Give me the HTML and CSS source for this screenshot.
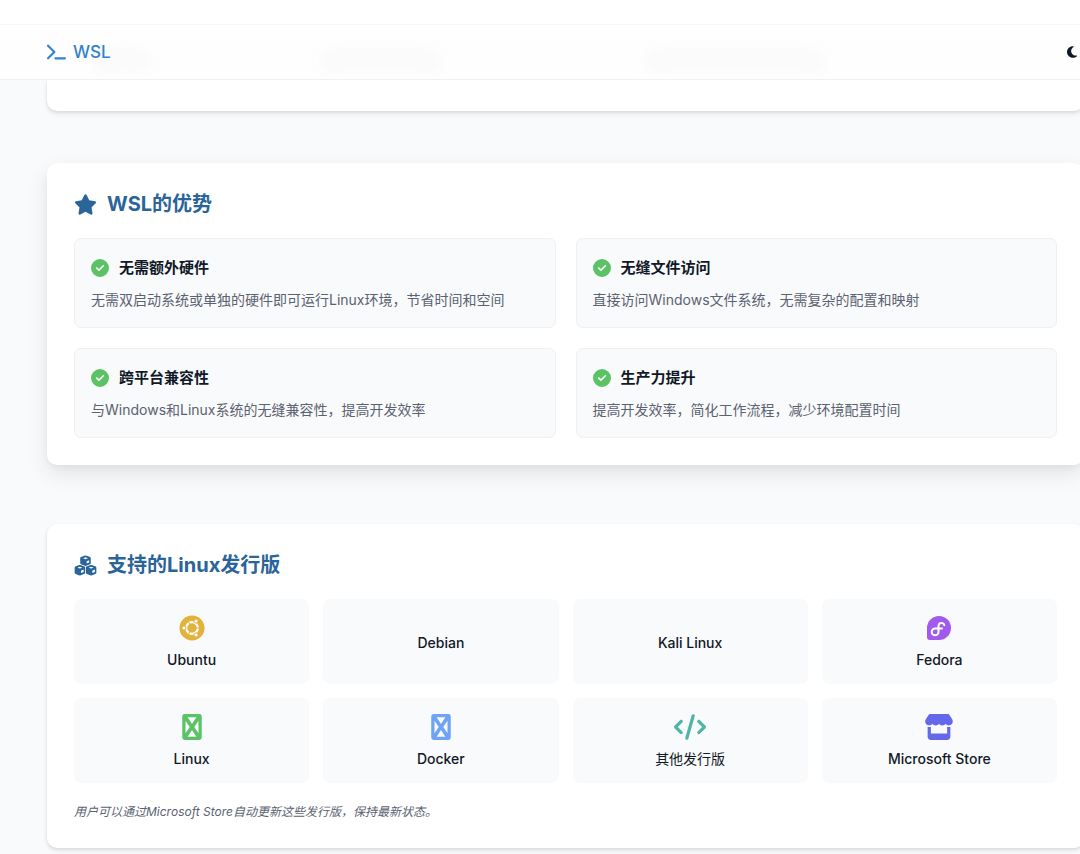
FILE: index.html
```html
<!DOCTYPE html>
<html lang="zh-CN">
<head>
  <meta charset="UTF-8">
  <meta name="viewport" content="width=device-width, initial-scale=1.0">
  <title>WSL</title>
  <link rel="stylesheet" href="styles.css">
</head>
<body>
  <!-- Shared icons -->
  <svg class="sprite" aria-hidden="true">
    <symbol id="check" viewBox="0 0 512 512">
      <path d="M256 512A256 256 0 1 0 256 0a256 256 0 1 0 0 512zM369 209L241 337c-9.400 9.400-24.600 9.400-33.900 0l-64-64c-9.400-9.400-9.400-24.600 0-33.900s24.600-9.400 33.900 0l47 47L335 175c9.400-9.400 24.600-9.400 33.900 0s9.400 24.600 0 33.900z"/>
    </symbol>
    <symbol id="missing" viewBox="0 0 384 512">
      <path fill-rule="evenodd" d="M48 0H336a48 48 0 0 1 48 48V464a48 48 0 0 1-48 48H48a48 48 0 0 1-48-48V48A48 48 0 0 1 48 0zM106 64L192 198 278 64zM64 132V380L148 256zM320 132L236 256 320 380zM192 314L106 448H278z"/>
    </symbol>
    <symbol id="cube" viewBox="0 0 24 24">
      <path d="M12 0L22 4Q24 5 24 7V17Q24 19 22 20L12 24 2 20Q0 19 0 17V7Q0 5 2 4z"/>
      <path fill="#fff" d="M12 4.500L17.500 6.500 12 8.600 6.500 6.500zM14.500 13.200L20.200 10.800V15.800L14.500 18.300z"/>
    </symbol>
  </svg>

  <div class="top-strip"></div>
  <header class="navbar">
    <span class="shade shade-1"></span>
    <span class="shade shade-2"></span>
    <span class="shade shade-3"></span>
    <div class="container nav-content">
      <a class="logo" href="#">
        <svg viewBox="0 0 576 512" aria-hidden="true"><path d="M9.400 86.600C-3.100 74.100-3.100 53.900 9.400 41.400s32.800-12.500 45.300 0l192 192c12.500 12.500 12.500 32.800 0 45.300l-192 192c-12.500 12.500-32.800 12.500-45.300 0s-12.500-32.800 0-45.300L178.700 256 9.400 86.600zM256 416H544c17.700 0 32 14.300 32 32s-14.300 32-32 32H256c-17.700 0-32-14.300-32-32s14.300-32 32-32z"/></svg>
        <span>WSL</span>
      </a>
      <button class="theme-toggle" type="button" aria-label="切换主题">
        <svg viewBox="0 0 384 512" aria-hidden="true"><path d="M223.500 32C100 32 0 132.300 0 256S100 480 223.500 480c60.600 0 115.500-24.200 155.800-63.400c5-4.900 6.300-12.500 3.100-18.700s-10.100-9.700-17-8.500c-9.800 1.700-19.800 2.600-30.100 2.600c-96.900 0-175.500-78.800-175.500-176c0-65.800 36-123.100 89.300-153.300c6.100-3.500 9.200-10.500 7.700-17.300s-7.300-11.900-14.300-12.500c-6.300-.5-12.600-.8-19-.8z"/></svg>
      </button>
    </div>
  </header>

  <main class="container">
    <section class="card card-end"></section>

    <!-- Advantages -->
    <section class="card card-raised">
      <h2>
        <svg viewBox="0 0 576 512" aria-hidden="true"><path d="M316.900 18C311.600 7 300.400 0 288.100 0s-23.400 7-28.800 18L195 150.300 51.400 171.500c-12 1.800-22 10.200-25.700 21.700s-.7 24.200 7.900 32.700L137.800 329 113.200 474.700c-2 12 3 24.200 12.900 31.300s23 8 33.800 2.300l128.300-68.500 128.300 68.500c10.800 5.700 23.900 4.900 33.800-2.300s14.900-19.300 12.900-31.300L438.500 329 542.700 225.900c8.600-8.500 11.700-21.200 7.900-32.700s-13.700-19.900-25.700-21.700L381.200 150.300 316.900 18z"/></svg>
        WSL的优势
      </h2>
      <div class="features">
        <div class="feature">
          <h3><svg aria-hidden="true"><use href="#check"/></svg>无需额外硬件</h3>
          <p>无需双启动系统或单独的硬件即可运行Linux环境，节省时间和空间</p>
        </div>
        <div class="feature">
          <h3><svg aria-hidden="true"><use href="#check"/></svg>无缝文件访问</h3>
          <p>直接访问Windows文件系统，无需复杂的配置和映射</p>
        </div>
        <div class="feature">
          <h3><svg aria-hidden="true"><use href="#check"/></svg>跨平台兼容性</h3>
          <p>与Windows和Linux系统的无缝兼容性，提高开发效率</p>
        </div>
        <div class="feature">
          <h3><svg aria-hidden="true"><use href="#check"/></svg>生产力提升</h3>
          <p>提高开发效率，简化工作流程，减少环境配置时间</p>
        </div>
      </div>
    </section>

    <!-- Distributions -->
    <section class="card">
      <h2>
        <svg viewBox="0 0 576 512" aria-hidden="true">
          <use href="#cube" x="153" y="0" width="270" height="270"/>
          <use href="#cube" x="10" y="236" width="274" height="274"/>
          <use href="#cube" x="292" y="236" width="274" height="274"/>
        </svg>
        支持的Linux发行版
      </h2>
      <div class="distros">
        <div class="distro">
          <svg class="ubuntu" viewBox="0 0 26 26" aria-hidden="true">
            <circle cx="13" cy="13" r="12.500"/>
            <circle cx="13" cy="13" r="5.800" fill="none" stroke="#fff" stroke-width="2.200"/>
            <g fill="#fff" stroke="currentColor">
              <circle cx="5" cy="13" r="2.100"/>
              <circle cx="17" cy="6.100" r="2.100"/>
              <circle cx="17" cy="19.900" r="2.100"/>
            </g>
            <path stroke="currentColor" d="M17 13H21M11 9.500L9 6.100M11 16.500L9 19.900"/>
          </svg>
          <span>Ubuntu</span>
        </div>
        <div class="distro"><span>Debian</span></div>
        <div class="distro"><span>Kali Linux</span></div>
        <div class="distro">
          <svg class="fedora" viewBox="-1 -1 26 26" aria-hidden="true">
            <path d="M12 0a12 12 0 0 1 0 24H3a3 3 0 0 1-3-3V12A12 12 0 0 1 12 0z"/>
            <path fill="none" stroke="#fff" stroke-width="2" stroke-linecap="round" d="M17.300 9.200A3 3 0 0 0 11.500 9.400V15.900A3.400 3.400 0 1 1 8.100 12.500H15"/>
          </svg>
          <span>Fedora</span>
        </div>
        <div class="distro">
          <svg class="linux" aria-hidden="true"><use href="#missing"/></svg>
          <span>Linux</span>
        </div>
        <div class="distro">
          <svg class="docker" aria-hidden="true"><use href="#missing"/></svg>
          <span>Docker</span>
        </div>
        <div class="distro">
          <svg class="other" viewBox="0 0 640 512" aria-hidden="true"><path d="M392.800 1.200c-17-4.900-34.700 5-39.600 22l-128 448c-4.900 17 5 34.700 22 39.600s34.700-5 39.600-22l128-448c4.900-17-5-34.700-22-39.600zm80.600 120.100c-12.500 12.500-12.500 32.800 0 45.300L562.700 256l-89.400 89.400c-12.500 12.500-12.500 32.800 0 45.300s32.800 12.500 45.300 0l112-112c12.500-12.500 12.500-32.800 0-45.300l-112-112c-12.500-12.500-32.800-12.500-45.300 0zm-306.700 0c-12.500-12.500-32.800-12.500-45.300 0l-112 112c-12.500 12.500-12.500 32.800 0 45.300l112 112c12.500 12.500 32.800 12.500 45.300 0s12.500-32.800 0-45.300L77.300 256l89.400-89.400c12.500-12.500 12.500-32.800 0-45.300z"/></svg>
          <span class="label-cjk">其他发行版</span>
        </div>
        <div class="distro">
          <svg class="store" viewBox="0 0 576 512" aria-hidden="true"><path d="M547.600 103.800L490.300 13.100C485.200 5 476.100 0 466.400 0H109.600C99.900 0 90.800 5 85.700 13.100L28.300 103.800c-29.600 46.800-3.400 111.900 51.900 119.400c4 .5 8.100 .8 12.100 .8c26.100 0 49.300-11.400 65.200-29c15.900 17.600 39.100 29 65.200 29c26.100 0 49.300-11.400 65.200-29c15.900 17.600 39.100 29 65.200 29c26.200 0 49.300-11.400 65.200-29c16 17.600 39.100 29 65.200 29c4.100 0 8.100-.3 12.100-.8c55.500-7.400 81.800-72.500 52.100-119.400zM499.700 254.900l-.1 0c-5.300 .7-10.700 1.100-16.200 1.100c-12.400 0-24.300-1.900-35.400-5.300V384H128V250.600c-11.200 3.500-23.200 5.400-35.600 5.400c-5.500 0-11-.4-16.300-1.100l-.1 0c-4.100-.6-8.100-1.300-12-2.300V448c0 35.300 28.700 64 64 64H448c35.300 0 64-28.700 64-64V252.600c-4 1-8 1.800-12.300 2.300z"/></svg>
          <span>Microsoft Store</span>
        </div>
      </div>
      <p class="note">用户可以通过Microsoft Store自动更新这些发行版，保持最新状态。</p>
    </section>
  </main>
</body>
</html>
```
FILE: styles.css
```css
* {
  box-sizing: border-box;
  margin: 0;
  padding: 0;
}

body {
  font-family: Inter, "Noto Sans CJK SC", sans-serif;
  font-size: 14px;
  color: #111827;
  background: #f9fafb;
  min-height: 100vh;
  overflow-x: hidden;
}

svg {
  fill: currentColor;
  flex-shrink: 0;
}

.sprite {
  position: absolute;
  width: 0;
  height: 0;
}

/* the content runs slightly past the right edge of the window */
.container {
  margin-left: 47px;
  margin-right: -4px;
}

.top-strip {
  height: 24px;
  background: #fff;
}

/* Navbar */
.navbar {
  position: relative;
  height: 56px;
  background: #fefefe;
  border-top: 1px solid #f6f7f8;
  border-bottom: 1px solid #f0f1f3;
  overflow: hidden;
}

.nav-content {
  display: flex;
  align-items: center;
  justify-content: space-between;
  height: 54px;
  position: relative;
}

.logo {
  display: flex;
  align-items: center;
  gap: 7px;
  font-size: 17px;
  font-weight: 500;
  color: #3182ce;
  text-decoration: none;
}

.logo svg {
  width: 19px;
  height: 18px;
}

.theme-toggle {
  border: none;
  background: none;
  color: #111827;
  padding: 0 7px;
  cursor: pointer;
}

.theme-toggle svg {
  display: block;
  width: 10px;
  height: 14px;
}

/* soft shadows of the content scrolled behind the bar */
.shade {
  position: absolute;
  top: 28px;
  height: 16px;
  background: #f8f8f8;
  filter: blur(8px);
}

.shade-1 {
  left: 9%;
  width: 50px;
}

.shade-2 {
  left: 30%;
  width: 115px;
}

.shade-3 {
  left: 60%;
  width: 175px;
}

/* Cards */
.card {
  background: #fff;
  border-radius: 10px;
  padding: 27px;
  margin-bottom: 56px;
  box-shadow: 0 3px 5px rgba(0, 0, 0, 0.08), 0 1px 3px rgba(0, 0, 0, 0.08);
}

.card:last-child {
  margin-bottom: 0;
}

.card-end {
  height: 31px;
  padding: 0;
  border-radius: 0 0 10px 10px;
}

.card-raised {
  transform: translateY(-4px);
  margin-bottom: 55px;
  box-shadow: 0 9px 22px rgba(0, 0, 0, 0.09), 0 3px 6px rgba(0, 0, 0, 0.04);
}

h2 {
  display: flex;
  align-items: center;
  gap: 10px;
  font-size: 20px;
  line-height: 28px;
  font-weight: 700;
  color: #2b6499;
  margin-bottom: 20px;
}

h2 svg {
  width: 23px;
  height: 21px;
}

/* Features */
.features {
  display: grid;
  grid-template-columns: repeat(2, 1fr);
  gap: 20px;
}

.feature {
  background: #f9fafb;
  border: 1px solid #eef0f2;
  border-radius: 7px;
  padding: 17px 16px 15px;
}

.feature h3 {
  display: flex;
  align-items: center;
  gap: 10px;
  font-size: 15px;
  line-height: 24px;
  font-weight: 600;
  margin-bottom: 8px;
}

.feature h3 svg {
  width: 18px;
  height: 18px;
  color: #5bc266;
}

.feature p {
  line-height: 24px;
  color: #5b6270;
}

/* Distros */
.distros {
  display: grid;
  grid-template-columns: repeat(4, 1fr);
  gap: 14px;
}

.distro {
  display: flex;
  flex-direction: column;
  align-items: center;
  justify-content: center;
  gap: 9px;
  padding: 16px 14px 14px;
  background: #f9fafb;
  border-radius: 7px;
  line-height: 20px;
  font-weight: 500;
}

.distro svg {
  width: 32px;
  height: 26px;
}

.label-cjk {
  font-weight: 400;
}

.ubuntu {
  color: #e2b23a;
}

.fedora {
  color: #a259ee;
}

.linux {
  color: #5bc266;
}

.docker {
  color: #6ea3f5;
}

.other {
  color: #4fb5a8;
}

.store {
  color: #6468ea;
}

.note {
  margin-top: 20px;
  font-size: 12px;
  line-height: 18px;
  font-style: italic;
  color: #5b6270;
}
```
